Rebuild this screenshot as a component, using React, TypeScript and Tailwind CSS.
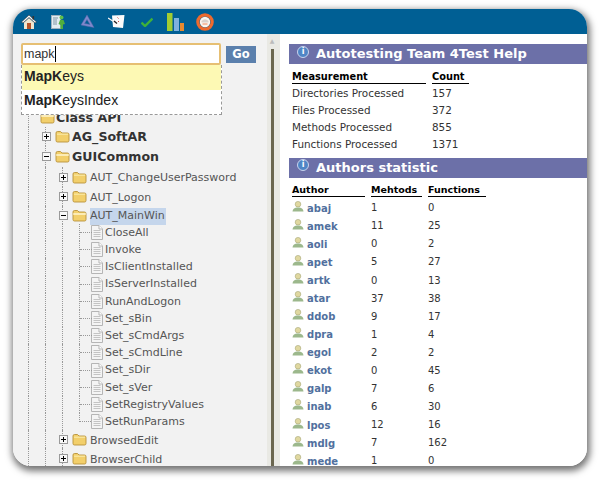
const font = "font-['Verdana','DejaVu_Sans',sans-serif]";

function Folder({ open }: { open?: boolean }) {
  return (
    <svg width="15" height="13" viewBox="0 0 15 13" className="shrink-0">
      <path d="M1 3 Q1 1.5 2.5 1.5 H5.5 L7 3 H12.5 Q14 3 14 4.5 V10.5 Q14 12 12.5 12 H2.5 Q1 12 1 10.5 Z" fill="#f2cf6b" stroke="#b8923a" strokeWidth="0.9" />
      {open ? <path d="M1.2 5 H13.8" stroke="#fff6cf" strokeWidth="1.6" /> : <path d="M2 4.2 H13" stroke="#fbeeb0" strokeWidth="1" />}
    </svg>
  );
}

function Box({ open }: { open?: boolean }) {
  return (
    <span className="relative -ml-[4px] flex h-[9px] w-[9px] shrink-0 items-center justify-center border border-[#9a9a9a] bg-[#f8f8f8]">
      <span className="h-px w-[5px] bg-black" />
      {!open && <span className="absolute h-[5px] w-px bg-black" />}
    </span>
  );
}

function FileIcon() {
  return (
    <svg width="12" height="15" viewBox="0 0 12 15" className="shrink-0">
      <path d="M0.5 0.5 H8 L11.5 4 V14.5 H0.5 Z" fill="#f4f4f4" stroke="#b5b5b5" />
      <path d="M8 .5 V4 H11.5" fill="#fff" stroke="#b5b5b5" />
      <path d="M2.5 5.5 H9.5 M2.5 7.5 H9.5 M2.5 9.5 H9.5 M2.5 11.5 H9.5" stroke="#c4c4c4" />
    </svg>
  );
}

function Guides({ n }: { n: number }) {
  return (
    <>
      {Array.from({ length: n }).map((_, i) => (
        <span key={i} className="h-full w-[17px] shrink-0 border-l border-dotted border-[#999]" />
      ))}
    </>
  );
}

function FolderRow({ depth, label, open, bold, selected, h }: { depth: number; label: string; open?: boolean; bold?: boolean; selected?: boolean; h: string }) {
  return (
    <div className={`flex items-center ${h}`}>
      <Guides n={depth} />
      <span className="flex h-full w-[10px] shrink-0 items-center border-l border-dotted border-[#999]">
        <Box open={open} />
      </span>
      <Folder open={open} />
      <span className={bold
        ? "ml-[2px] mt-[2px] text-[12.6px] font-bold text-[#333]"
        : `ml-[3px] text-[11px] text-[#555] ${selected ? "mt-[3px] bg-[#c5d6ec] pr-[1px]" : "mt-[3px]"}`}>
        {label}
      </span>
    </div>
  );
}

function LeafRow({ label, last }: { label: string; last?: boolean }) {
  return (
    <div className="flex h-[17.2px] items-center">
      <Guides n={3} />
      <span className={`relative h-full w-[12px] shrink-0 ${last ? "" : "border-l border-dotted border-[#999]"}`}>
        {last && <span className="absolute left-0 top-0 h-[9px] border-l border-dotted border-[#999]" />}
        <span className="absolute left-0 top-[8px] w-[12px] border-t border-dotted border-[#999]" />
      </span>
      <FileIcon />
      <span className="ml-[2px] mt-[1px] text-[11px] text-[#555]">{label}</span>
    </div>
  );
}

function Info() {
  return (
    <span className="mb-[5px] flex h-[12px] w-[12px] shrink-0 items-center justify-center rounded-full border border-[#c9d4ee] bg-[#4f86c6] text-[8px] font-bold leading-none text-white">
      i
    </span>
  );
}

function Section({ title }: { title: string }) {
  return (
    <div className="flex h-[20px] items-center gap-[7px] bg-[#6c70a8] pl-[8px] text-[13px] font-bold text-white">
      <Info />
      <span>{title}</span>
    </div>
  );
}

function Person() {
  return (
    <svg width="12" height="11" viewBox="0 0 12 11" className="mb-[3px] shrink-0">
      <circle cx="6" cy="3.2" r="2.8" fill="#e0d8a0" stroke="#a8a878" strokeWidth="0.6" />
      <path d="M0.5 10.5 Q1 7 4.5 6.6 H7.5 Q11 7 11.5 10.5 Z" fill="#9cb88c" />
    </svg>
  );
}

const leaves = ["CloseAll", "Invoke", "IsClientInstalled", "IsServerInstalled", "RunAndLogon", "Set_sBin", "Set_sCmdArgs", "Set_sCmdLine", "Set_sDir", "Set_sVer", "SetRegistryValues", "SetRunParams"];

const stats = [
  ["Directories Processed", "157"],
  ["Files Processed", "372"],
  ["Methods Processed", "855"],
  ["Functions Processed", "1371"],
];

const authors: [string, string, string][] = [
  ["abaj", "1", "0"], ["amek", "11", "25"], ["aoli", "0", "2"], ["apet", "5", "27"], ["artk", "0", "13"],
  ["atar", "37", "38"], ["ddob", "9", "17"], ["dpra", "1", "4"], ["egol", "2", "2"], ["ekot", "0", "45"],
  ["galp", "7", "6"], ["inab", "6", "30"], ["lpos", "12", "16"], ["mdlg", "7", "162"], ["mede", "1", "0"],
];

function ToolIcons() {
  return (
    <div className="flex h-[25px] items-center gap-[14px] bg-[#005f94] pl-[8px]">
      <svg width="16" height="16" viewBox="0 0 16 16">
        <path d="M3 8.5 L8 4 L13 8.5 V15 H3 Z" fill="#f0e6d0" />
        <path d="M8 1 L15.5 8 L14 9 L8 3.5 L2 9 L.5 8 Z" fill="#f5f5f5" stroke="#222" strokeWidth=".5" />
        <rect x="6" y="9" width="4" height="6" fill="#b5532a" />
        <rect x="11.5" y="2" width="1.6" height="3.5" fill="#333" />
      </svg>
      <svg width="15" height="16" viewBox="0 0 15 16">
        <rect x=".5" y="1.5" width="9" height="13" fill="#e4ecf2" stroke="#9fb0bd" />
        <path d="M2 4 H7 M2 6 H6 M2 8 H6 M2 10 H6" stroke="#7f95a5" />
        <circle cx="10.5" cy="3.5" r="2" fill="#5fc04a" />
        <path d="M9 6 H12.5 L14 10 L12 10.5 V15 H9.5 V11 L7.5 10 Z" fill="#4fae3e" />
      </svg>
      <svg width="15" height="15" viewBox="0 0 15 15">
        <path d="M7 1 L14 13.5 L1 11 Z M7 5.5 L4.5 9.5 L10 10.5 Z" fill="#7f88cc" fillRule="evenodd" stroke="#5f68aa" strokeWidth=".5" />
      </svg>
      <svg width="17" height="15" viewBox="0 0 17 15" className="ml-[-1px]">
        <path d="M4 1.5 L16.5 1 L15 14 L5 13 Z" fill="#fbfbfb" />
        <path d="M0 4 L8 9" stroke="#f5f5f5" strokeWidth="1.4" />
        <path d="M6 7 L9 9.5" stroke="#222" strokeWidth="1.4" />
        <path d="M9.5 3.5 L10.5 4.5 M10 7 L11 8" stroke="#cc4444" />
      </svg>
      <svg width="12" height="10" viewBox="0 0 12 10" className="ml-[2px]">
        <path d="M.5 5.5 L4 9 L11.5 1.5" fill="none" stroke="#3fb03a" strokeWidth="2.4" />
      </svg>
      <svg width="17" height="18" viewBox="0 0 17 18">
        <rect x="0" y="0" width="5.5" height="18" fill="#a2cc32" />
        <rect x="7" y="5" width="5" height="13" fill="#7fb0e0" />
        <rect x="13" y="10" width="4" height="8" fill="#e88a30" />
      </svg>
      <svg width="18" height="18" viewBox="0 0 18 18" className="ml-[-2px]">
        <circle cx="9" cy="9" r="7.2" fill="none" stroke="#ee6a2e" strokeWidth="3.2" />
        <circle cx="9" cy="9" r="5.2" fill="#fdf6ee" />
        <path d="M5.5 8 Q9 4.5 12.5 8 V9.6 H5.5 Z" fill="#d9d2cc" />
        <path d="M6.5 11 H11.5" stroke="#ee8a5e" strokeWidth="1" />
      </svg>
    </div>
  );
}

function SearchBar() {
  return (
    <div className="relative h-[73px] pl-[8px] pt-[9px]">
      <div className="flex items-start gap-[5px]">
        <div className="flex h-[22px] w-[200px] items-center rounded-[2px] border-2 border-[#e6bf73] bg-white pl-[1px] font-['Liberation_Sans',sans-serif] text-[12.5px] text-[#333]">
          mapk<span className="h-[16px] w-px bg-black" />
        </div>
        <div className="mt-[3px] flex h-[17px] w-[30px] items-center justify-center bg-[#5b80ad] text-[11.5px] font-bold text-white">Go</div>
      </div>
      <div className="absolute left-[8px] top-[31px] z-10 w-[201px] border-x border-b border-dashed border-[#999] bg-white font-['Liberation_Sans',sans-serif] text-[14px] text-[#222]">
        <div className="flex h-[25px] items-center bg-[#fdf9b4] pb-[2px] pl-[2px]"><b>MapK</b>eys</div>
        <div className="flex h-[24px] items-center pb-[3px] pl-[2px]"><b>MapK</b>eysIndex</div>
      </div>
    </div>
  );
}

export default function App() {
  return (
    <div className={`h-[483px] w-[600px] overflow-hidden bg-white pl-[13px] pt-[9px] ${font}`}>
      <div className="flex h-[457px] w-[574px] flex-col overflow-hidden rounded-[18px] shadow-[1px_3px_7px_2px_rgba(0,0,0,0.55)]">
        <ToolIcons />
        <div className="flex min-h-0 flex-1">
          <div className="w-[254px] shrink-0 overflow-hidden bg-[#f2f2f2]">
            <SearchBar />
            <div className="pl-[15px]">
              <div className="flex h-[20px] items-center border-l border-dotted border-[#999] pl-[11px]">
                <Folder open />
                <span className="ml-[1px] mt-[2px] text-[12.6px] font-bold text-[#333]">Class API</span>
              </div>
              <FolderRow depth={1} h="h-[19px]" bold label="AG_SoftAR" />
              <FolderRow depth={1} h="h-[21px]" bold open label="GUICommon" />
              <FolderRow depth={2} h="h-[20px]" label="AUT_ChangeUserPassword" />
              <FolderRow depth={2} h="h-[19px]" label="AUT_Logon" />
              <FolderRow depth={2} h="h-[18px]" open selected label="AUT_MainWin" />
              {leaves.map((l, i) => <LeafRow key={l} label={l} last={i === leaves.length - 1} />)}
              <FolderRow depth={2} h="h-[18px]" label="BrowsedEdit" />
              <FolderRow depth={2} h="h-[20px]" label="BrowserChild" />
            </div>
          </div>
          <div className="flex w-[13px] shrink-0 flex-col items-center bg-[#e9e9e4] pr-[3px] pt-[3px]">
            <span className="text-[6px] leading-[8px] text-[#bbb]">▲</span>
            <span className="mt-[4px] w-[3px] flex-1 bg-[#6b6750]" />
          </div>
          <div className="min-w-0 flex-1 overflow-hidden bg-white pl-[9px] pt-[10px] text-[10.4px] text-[#333]">
            <Section title="Autotesting Team 4Test Help" />
            <div className="pl-[3px] pt-[5px]">
              <div className="flex h-[17px] items-center gap-[6px] text-[9.8px] font-bold text-black">
                <span className="w-[134px] border-b border-black leading-[12px]">Measurement</span>
                <span className="w-[37px] border-b border-black leading-[12px]">Count</span>
              </div>
              <div className="-mt-[1px]">
                {stats.map(([a, b]) => (
                  <div key={a} className="flex h-[17.2px] items-center gap-[6px]">
                    <span className="w-[134px]">{a}</span>
                    <span>{b}</span>
                  </div>
                ))}
              </div>
            </div>
            <div className="pt-[4px]"><Section title="Authors statistic" /></div>
            <div className="pl-[3px] pt-[5px]">
              <div className="flex h-[16px] items-center gap-[6px] text-[9.5px] font-bold text-black">
                <span className="w-[73px] border-b border-black leading-[12px]">Author</span>
                <span className="w-[51px] border-b border-black leading-[12px]">Mehtods</span>
                <span className="w-[58px] border-b border-black leading-[12px]">Functions</span>
              </div>
              {authors.map(([a, m, f]) => (
                <div key={a} className="flex h-[18.07px] items-center gap-[6px]">
                  <span className="flex w-[73px] items-center gap-[3px] font-bold text-[#51709e]">
                    <Person /><span className="mt-[1px] text-[10px]">{a}</span>
                  </span>
                  <span className="w-[51px] text-[10px]">{m}</span>
                  <span className="text-[10px]">{f}</span>
                </div>
              ))}
            </div>
          </div>
        </div>
      </div>
    </div>
  );
}
